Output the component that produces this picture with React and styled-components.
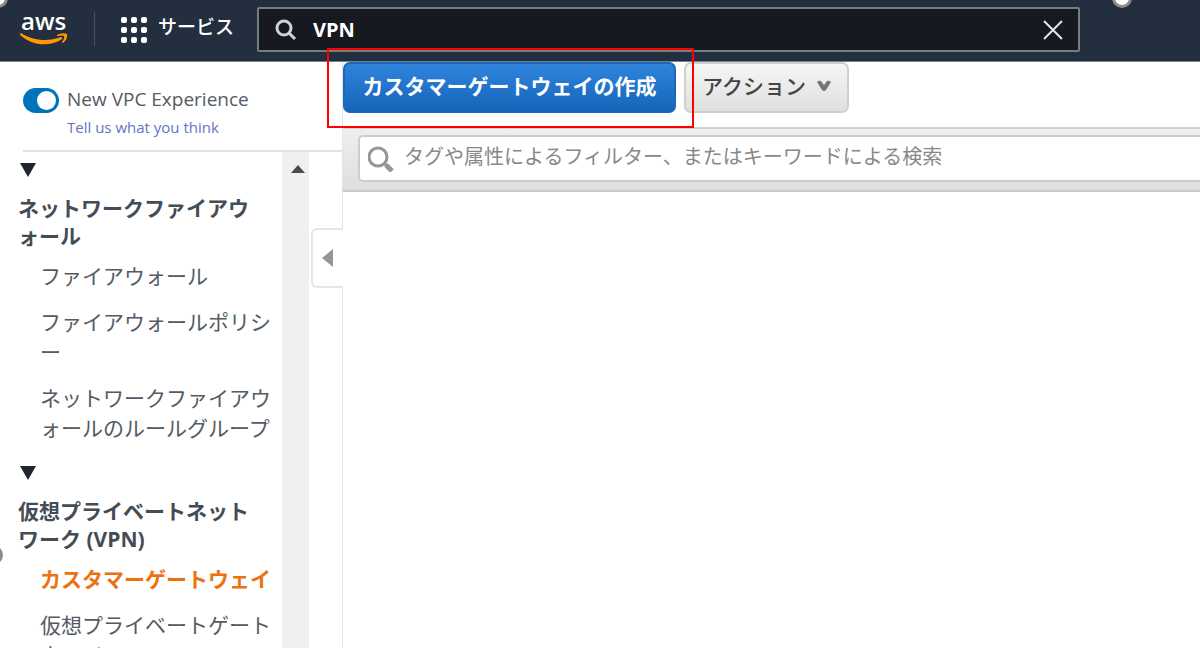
import React, { useState } from "react";
import styled, { createGlobalStyle } from "styled-components";

const sections = [
  {
    id: "firewall",
    title: "ネットワークファイアウォール",
    items: [
      "ファイアウォール",
      "ファイアウォールポリシー",
      "ネットワークファイアウォールのルールグループ",
    ],
  },
  {
    id: "vpn",
    title: "仮想プライベートネットワーク (VPN)",
    items: ["カスタマーゲートウェイ", "仮想プライベートゲートウェイ"],
  },
];

const App = () => {
  const [service, setService] = useState("VPN");
  const [filter, setFilter] = useState("");
  const [experience, setExperience] = useState(true);
  const current = "カスタマーゲートウェイ";

  return (
    <>
      <GlobalStyle />
      <Page>
        <Header>
          <LogoLink href="#home" aria-label="aws">
            <LogoText>aws</LogoText>
            <Smile viewBox="0 0 48 14" aria-hidden="true">
              <path d="M1 1C13 9 28 10 41 5Q43 5 42 7C29 16 11 13 0 3Q0 1 1 1Z" />
              <path d="M37 3Q42 0 47 2Q48 7 43 11Q42 11 42 10Q45 6 44 4Q42 3 38 4Q36 4 37 3Z" />
            </Smile>
          </LogoLink>
          <Services type="button">
            <GridIcon viewBox="0 0 26 26" aria-hidden="true">
              {[0, 10, 20].map((y) =>
                [0, 10, 20].map((x) => (
                  <rect key={`${x}-${y}`} x={x} y={y} width="6" height="6" rx="2" />
                ))
              )}
            </GridIcon>
            サービス
          </Services>
          <ServiceSearch>
            <SearchIcon viewBox="0 0 22 22" aria-hidden="true">
              <circle cx="9" cy="9" r="7" />
              <path d="M14 14L20 20" />
            </SearchIcon>
            <ServiceInput
              aria-label="サービスを検索"
              value={service}
              onChange={(e) => setService(e.target.value)}
            />
            <Clear type="button" aria-label="クリア" onClick={() => setService("")}>
              <svg width="20" height="20" viewBox="0 0 20 20">
                <path d="M1 1L19 19M19 1L1 19" />
              </svg>
            </Clear>
          </ServiceSearch>
        </Header>

        <Body>
          <Sidebar>
            <Experience>
              <Switch
                id="experience"
                type="checkbox"
                checked={experience}
                onChange={(e) => setExperience(e.target.checked)}
              />
              <div>
                <ExperienceLabel htmlFor="experience">
                  New VPC Experience
                </ExperienceLabel>
                <Feedback href="#feedback">Tell us what you think</Feedback>
              </div>
            </Experience>
            <Scroller>
              <Nav>
                {sections.map((section) => (
                  <section key={section.id}>
                    <Caret viewBox="0 0 16 14" aria-hidden="true">
                      <path d="M0 0H16L8 14Z" />
                    </Caret>
                    <SectionTitle>{section.title}</SectionTitle>
                    <List>
                      {section.items.map((item) => (
                        <li key={item}>
                          <NavLink href="#item" $active={item === current}>
                            {item}
                          </NavLink>
                        </li>
                      ))}
                    </List>
                  </section>
                ))}
              </Nav>
              <Track>
                <svg width="14" height="8" viewBox="0 0 14 8" aria-hidden="true">
                  <path d="M0 8L7 0L14 8Z" fill="#4a4a4a" />
                </svg>
              </Track>
            </Scroller>
            <Collapse type="button" aria-label="メニューを閉じる">
              <svg width="11" height="18" viewBox="0 0 11 18">
                <path d="M11 0V18L0 9Z" fill="#959595" />
              </svg>
            </Collapse>
          </Sidebar>

          <Main>
            <Toolbar>
              <Highlighted>
                <Button type="button" $primary>
                  カスタマーゲートウェイの作成
                </Button>
              </Highlighted>
              <Button type="button">
                アクション
                <svg width="14" height="12" viewBox="0 0 14 12" aria-hidden="true">
                  <path d="M0 2Q2 0 4 1L7 5L10 1Q12 0 14 2L9 10Q7 12 5 10Z" fill="#777" />
                </svg>
              </Button>
            </Toolbar>
            <FilterBar>
              <FilterField>
                <FilterIcon viewBox="0 0 26 26" aria-hidden="true">
                  <circle cx="10" cy="11" r="9" />
                  <path d="M16 17L19 20" />
                  <path d="M18 19L24 25" strokeWidth="5" />
                </FilterIcon>
                <FilterInput
                  aria-label="フィルター"
                  placeholder="タグや属性によるフィルター、またはキーワードによる検索"
                  value={filter}
                  onChange={(e) => setFilter(e.target.value)}
                />
              </FilterField>
            </FilterBar>
          </Main>
        </Body>
        <Handle $left="-12px" $top="-12px" />
        <Handle $left="1112px" $top="-12px" />
        <Handle $left="-17px" $top="545px" />
      </Page>
    </>
  );
};

export default App;

const GlobalStyle = createGlobalStyle`
  * {
    box-sizing: border-box;
  }
  body {
    margin: 0;
    background-color: #fff;
    font-family: "Open Sans", "Noto Sans CJK JP", sans-serif;
  }
  button,
  input {
    font-family: inherit;
  }
`;

const Page = styled.div`
  position: relative;
  display: flex;
  flex-direction: column;
  height: 100vh;
  overflow: hidden;
`;

const Header = styled.header`
  display: flex;
  flex: none;
  align-items: flex-start;
  height: 62px;
  padding: 7px 120px 0 20px;
  background-color: #232f3e;
  border-bottom: 1px solid #777f88;
`;

const LogoLink = styled.a`
  display: flex;
  flex-direction: column;
  width: 75px;
  height: 34px;
  margin-top: 5px;
  color: #fff;
  text-decoration: none;
  border-right: 1px solid #48525f;
`;

const LogoText = styled.span`
  height: 20px;
  padding-left: 1px;
  font-size: 24px;
  font-weight: 600;
  line-height: 17px;
`;

const Smile = styled.svg`
  width: 48px;
  height: 14px;
  fill: #f90;
`;

const Services = styled.button`
  display: flex;
  align-items: center;
  width: 162px;
  height: 40px;
  padding: 0 0 0 26px;
  gap: 11px;
  color: #fff;
  font-size: 19px;
  font-weight: 500;
  line-height: 40px;
  white-space: nowrap;
  background: none;
  border: 0;
`;

const GridIcon = styled.svg`
  width: 26px;
  height: 26px;
  margin-top: 5px;
  fill: #fff;
`;

const ServiceSearch = styled.div`
  display: flex;
  flex: 1;
  align-items: center;
  height: 45px;
  padding: 0 15px 0 16px;
  background-color: #16191f;
  border: 2px solid #72807f;
  border-radius: 2px;
`;

const SearchIcon = styled.svg`
  flex: none;
  width: 22px;
  height: 22px;
  fill: none;
  stroke: #d0d3d6;
  stroke-width: 3;
`;

const ServiceInput = styled.input`
  flex: 1;
  min-width: 0;
  padding: 0 0 0 16px;
  color: #fff;
  font-size: 20px;
  font-weight: 700;
  background: none;
  border: 0;
  outline: 0;
`;

const Clear = styled.button`
  display: flex;
  padding: 0;
  background: none;
  border: 0;

  path {
    stroke: #e4e6e8;
    stroke-width: 2;
  }
`;

const Body = styled.div`
  display: flex;
  flex: 1;
  min-height: 0;
`;

const Sidebar = styled.aside`
  position: relative;
  display: flex;
  flex: none;
  flex-direction: column;
  width: 343px;
  border-right: 1px solid #e4e4e4;
`;

const Experience = styled.div`
  display: flex;
  flex: none;
  gap: 8px;
  height: 90px;
  margin-left: 23px;
  padding-top: 23px;
  border-bottom: 2px solid #e2e2e2;
`;

const Switch = styled.input`
  flex: none;
  width: 36px;
  height: 25px;
  margin: 3px 0 0;
  padding: 3px;
  background-color: #0073bb;
  border-radius: 13px;
  appearance: none;

  &::before {
    display: block;
    width: 19px;
    height: 19px;
    margin-left: auto;
    background-color: #fff;
    border-radius: 50%;
    content: "";
  }

  &:not(:checked)::before {
    margin-left: 0;
  }
`;

const ExperienceLabel = styled.label`
  display: block;
  color: #545b64;
  font-size: 19px;
  line-height: 28px;
`;

const Feedback = styled.a`
  display: block;
  color: #6673c0;
  font-size: 15px;
  line-height: 28px;
  text-decoration: none;
`;

const Scroller = styled.div`
  display: flex;
  flex: 1;
  min-height: 0;
  overflow: hidden;
`;

const Nav = styled.nav`
  width: 282px;
  padding: 11px 0 0 18px;
  line-break: anywhere;
`;

const Caret = styled.svg`
  display: block;
  width: 16px;
  height: 14px;
  margin-left: 2px;
  fill: #20262e;
`;

const SectionTitle = styled.h2`
  margin: 17px 24px 11px 0;
  color: #444c56;
  font-size: 21px;
  font-weight: 700;
  line-height: 28px;
`;

const List = styled.ul`
  display: flex;
  flex-direction: column;
  gap: 16px;
  margin: 0 0 23px 22px;
  padding: 0;
  list-style: none;
`;

const NavLink = styled.a`
  display: block;
  color: ${(props) => (props.$active ? "#ec7211" : "#545b64")};
  font-size: 21px;
  font-weight: ${(props) => (props.$active ? 700 : 400)};
  line-height: 30px;
  text-decoration: none;
`;

const Track = styled.div`
  display: flex;
  justify-content: center;
  width: 27px;
  padding: 13px 0 0 5px;
  background-color: #f0f0f0;
`;

/* tab that hangs on the edge of the sidebar */
const Collapse = styled.button`
  position: absolute;
  top: 166px;
  right: -1px;
  display: flex;
  align-items: center;
  width: 32px;
  height: 60px;
  padding: 0 0 0 9px;
  background-color: #fff;
  border: 2px solid #e6e6e6;
  border-right: 0;
  border-radius: 6px 0 0 6px;
`;

const Main = styled.main`
  flex: 1;
  min-width: 0;
`;

const Toolbar = styled.div`
  display: flex;
  gap: 8px;
  height: 65px;
`;

const Highlighted = styled.div`
  position: relative;

  &::after {
    position: absolute;
    top: -14px;
    right: -18px;
    bottom: -1px;
    left: -16px;
    z-index: 1;
    border: 2px solid #f00;
    content: "";
    pointer-events: none;
  }
`;

const Button = styled.button`
  display: flex;
  align-items: center;
  justify-content: center;
  gap: 11px;
  width: ${(props) => (props.$primary ? "333px" : "165px")};
  height: 51px;
  padding: 0 0 3px;
  color: ${(props) => (props.$primary ? "#fff" : "#444")};
  font-size: 21px;
  font-weight: ${(props) => (props.$primary ? 700 : 500)};
  line-height: 28px;
  white-space: nowrap;
  background: ${(props) =>
    props.$primary
      ? "linear-gradient(#3084dc, #1465ba)"
      : "linear-gradient(#f6f6f6, #dfdfdf)"};
  border: 2px solid ${(props) => (props.$primary ? "#1b68b9" : "#cfcfcf")};
  border-radius: 7px;
`;

const FilterBar = styled.div`
  height: 65px;
  padding: 6px 0 0 15px;
  background: linear-gradient(#efefef, #dedede);
  border-top: 2px solid #d2d2d2;
  border-bottom: 2px solid #cacaca;
`;

const FilterField = styled.div`
  display: flex;
  align-items: center;
  height: 47px;
  padding-left: 8px;
  background-color: #fff;
  border: 2px solid #ccc;
  border-right: 0;
  border-radius: 5px 0 0 5px;
`;

const FilterIcon = styled.svg`
  flex: none;
  width: 26px;
  height: 26px;
  fill: none;
  stroke: #969696;
  stroke-width: 3;
`;

const FilterInput = styled.input`
  flex: 1;
  min-width: 0;
  height: 36px;
  padding: 0 0 5px 10px;
  font-size: 20px;
  background: none;
  border: 0;
  outline: 0;

  &::placeholder {
    color: #888;
    opacity: 1;
  }
`;

/* selection handles lying over the edges of the page */
const Handle = styled.span`
  position: absolute;
  top: ${(props) => props.$top};
  left: ${(props) => props.$left};
  width: 20px;
  height: 20px;
  background-color: #fff;
  border: 3px solid #8c8c8c;
  border-radius: 50%;
`;
